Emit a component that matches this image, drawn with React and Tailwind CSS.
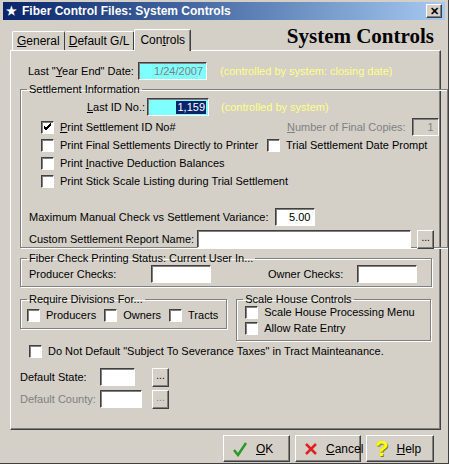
const sunken = 'border border-t-[#404040] border-l-[#404040] border-b-white border-r-white shadow-[inset_1px_1px_0_#808080]'
const raised = 'border border-t-white border-l-white border-b-[#404040] border-r-[#404040] shadow-[inset_-1px_-1px_0_#808080] bg-[#d4d0c8]'

function Box({ checked, className = '' }) {
  return (
    <span className={`w-[13px] h-[13px] bg-white ${sunken} flex items-center justify-center shrink-0 ${className}`}>
      {checked && (
        <svg width="9" height="9" viewBox="0 0 9 9"><path d="M1 4l2 2 5-5M1 5l2 2 5-5M1 3l2 2 5-5" stroke="#000" strokeWidth="1" fill="none" /></svg>
      )}
    </span>
  )
}

function Check({ label, checked, className = '' }) {
  return (
    <div className={`flex items-center gap-[6px] h-[18px] whitespace-nowrap ${className}`}>
      <Box checked={checked} />
      <span>{label}</span>
    </div>
  )
}

function Group({ title, className = '', children }) {
  return (
    <fieldset className={`border border-[#808080] shadow-[1px_1px_0_white,inset_1px_1px_0_white] px-[8px] pb-[4px] ${className}`}>
      <legend className="px-[2px] ml-[-2px] leading-[14px] whitespace-nowrap">{title}</legend>
      {children}
    </fieldset>
  )
}

function Dots({ disabled }) {
  return (
    <button className={`${raised} w-[17px] h-[19px] text-[10px] leading-none pb-[2px] ${disabled ? 'text-[#808080]' : ''}`}>...</button>
  )
}

function BigBtn({ icon, label, w }) {
  return (
    <button className={`${raised} h-[27px] flex items-center gap-[8px] px-[8px] ${w}`} style={{ fontFamily: 'inherit' }}>
      {icon}
      <span>{label}</span>
    </button>
  )
}

export default function App() {
  return (
    <div className="w-[449px] h-[464px] bg-[#d4d0c8] text-[11px] text-black overflow-hidden relative border-r border-b border-[#404040] whitespace-nowrap" style={{ fontFamily: '"Liberation Sans", Arial, sans-serif' }}>
      <div className="h-[18px] mx-[3px] mt-[2px] flex items-center px-[3px] bg-gradient-to-r from-[#0a246a] to-[#a6caf0] text-white font-bold text-[12px]">
        <span className="mr-[5px] text-[12px]">★</span>
        <span>Fiber Control Files: System Controls</span>
        <span className={`${raised} ml-auto w-[16px] h-[14px] text-black text-[11px] flex items-center justify-center leading-none`}>✕</span>
      </div>

      <div className="flex items-end mx-[12px] mt-[8px] h-[22px] text-[12px]">
        <div className="px-[4px] h-[19px] border-t border-l border-white border-r border-r-[#404040] rounded-t-[2px] leading-[18px]"><u>G</u>eneral</div>
        <div className="px-[4px] h-[19px] border-t border-white border-r border-r-[#404040] rounded-t-[2px] leading-[18px]"><u>D</u>efault G/L</div>
        <div className="px-[5px] h-[22px] border-t border-l border-white border-r border-r-[#404040] shadow-[inset_-1px_0_0_#808080] rounded-t-[2px] leading-[20px] bg-[#d4d0c8] relative top-[1px] z-10">Con<u>t</u>rols</div>
        <div className="ml-auto mr-[2px] mb-[3px] text-[21px] font-bold leading-none" style={{ fontFamily: '"Liberation Serif", "Times New Roman", serif' }}>System Controls</div>
      </div>

      <div className="mx-[10px] w-[431px] h-[380px] border-t border-l border-white border-b border-r border-b-[#404040] border-r-[#404040] shadow-[inset_-1px_-1px_0_#808080] px-[9px] pt-[11px]">
        <div className="flex items-center h-[18px]">
          <span className="w-[118px] pl-[8px]">Last "<u>Y</u>ear End" Date:</span>
          <span className={`w-[69px] h-[18px] bg-[#80ffff] ${sunken} text-[#808080] text-right pr-[3px] leading-[16px]`}>1/24/2007</span>
          <span className="ml-[13px] text-[#ffff80]">(controlled by system: closing date)</span>
        </div>

        <Group title="Settlement Information" className="mt-[2px] h-[166px] w-[412px]">
          <div className="flex items-center h-[18px] mt-[2px]">
            <span className="w-[118px] text-right pr-[2px]"><u>L</u>ast ID No.:</span>
            <span className={`w-[62px] h-[18px] bg-[#80ffff] ${sunken} flex justify-end items-center pr-[2px]`}>
              <span className="bg-[#0a246a] text-white px-[1px] leading-[13px]">1,159</span>
            </span>
            <span className="ml-[12px] text-[#ffff80]">(controlled by system)</span>
          </div>
          <div className="flex mt-[2px]">
            <div className="w-[238px] pl-[12px] flex flex-col">
              <Check checked label={<><u>P</u>rint Settlement ID No#</>} />
              <Check label="Print Final Settlements Directly to Printer" />
              <Check label={<>Print <u>I</u>nactive Deduction Balances</>} />
              <Check label="Print Stick Scale Listing during Trial Settlement" />
            </div>
            <div className="flex flex-col">
              <div className="flex items-center h-[18px] text-[#808080] ml-[20px]">
                <span><u>N</u>umber of Final Copies:</span>
                <span className={`ml-[6px] w-[27px] h-[18px] ${sunken} text-right pr-[4px] leading-[16px]`}>1</span>
              </div>
              <Check label="Trial Settlement Date Prompt" />
            </div>
          </div>
          <div className="flex items-center h-[20px] mt-[17px]">
            <span>Maximum Manual Check vs Settlement Variance:</span>
            <span className={`ml-[7px] w-[40px] h-[18px] bg-white ${sunken} text-right pr-[4px] leading-[16px]`}>5.00</span>
          </div>
          <div className="flex items-center h-[20px] mt-[2px]">
            <span>Custom Settlement Report Name:</span>
            <span className={`ml-[3px] w-[214px] h-[18px] bg-white ${sunken}`} />
            <span className="ml-[6px]"><Dots /></span>
          </div>
        </Group>

        <Group title="Fiber Check Printing Status: Current User In..." className="mt-[3px] h-[36px] w-[412px]">
          <div className="flex items-center h-[20px] -mt-[1px]">
            <span className="w-[122px]">Producer Checks:</span>
            <span className={`w-[60px] h-[18px] bg-white ${sunken}`} />
            <span className="ml-[57px] w-[89px]">Owner Checks:</span>
            <span className={`w-[60px] h-[18px] bg-white ${sunken}`} />
          </div>
        </Group>

        <div className="flex mt-[5px] gap-[9px]">
          <Group title="Require Divisions For..." className="h-[37px] w-[201px]">
            <div className="flex items-center gap-[8px] -ml-[2px]">
              <Check label="Producers" />
              <Check label="Owners" />
              <Check label="Tracts" />
            </div>
          </Group>
          <Group title="Scale House Controls" className="h-[49px] w-[202px]">
            <div className="flex flex-col -mt-[3px]">
              <Check label="Scale House Processing Menu" />
              <Check label="Allow Rate Entry" className="-mt-[2px]" />
            </div>
          </Group>
        </div>

        <Check label={`Do Not Default "Subject To Severance Taxes" in Tract Mainteanance.`} className="ml-[9px] mt-[1px]" />

        <div className="flex items-center h-[20px] mt-[7px]">
          <span className="w-[80px]">Default State:</span>
          <span className={`w-[35px] h-[18px] bg-white ${sunken}`} />
          <span className="ml-[17px]"><Dots /></span>
        </div>
        <div className="flex items-center h-[20px] mt-[2px]">
          <span className="w-[80px] text-[#808080]">Default County:</span>
          <span className={`w-[42px] h-[18px] bg-white ${sunken}`} />
          <span className="ml-[10px]"><Dots disabled /></span>
        </div>
      </div>

      <div className="flex justify-end gap-[5px] mr-[14px] mt-[5px] text-[12px]">
        <BigBtn w="w-[67px]" label={<><u>O</u>K</>} icon={<svg width="16" height="16" viewBox="0 0 16 16"><path d="M2 9l4 5 8-12" stroke="#2a9a2a" strokeWidth="2.5" fill="none" /></svg>} />
        <BigBtn w="w-[66px]" label={<><u>C</u>ancel</>} icon={<svg width="14" height="14" viewBox="0 0 14 14" className="shrink-0"><path d="M2 2L12 12M12 2L2 12" stroke="#e02020" strokeWidth="2.5" fill="none" /></svg>} />
        <BigBtn w="w-[68px]" label={<><u>H</u>elp</>} icon={<span className="text-[22px] font-bold text-[#ffff00] leading-none" style={{ textShadow: '1px 1px 0 #808000' }}>?</span>} />
      </div>
    </div>
  )
}
